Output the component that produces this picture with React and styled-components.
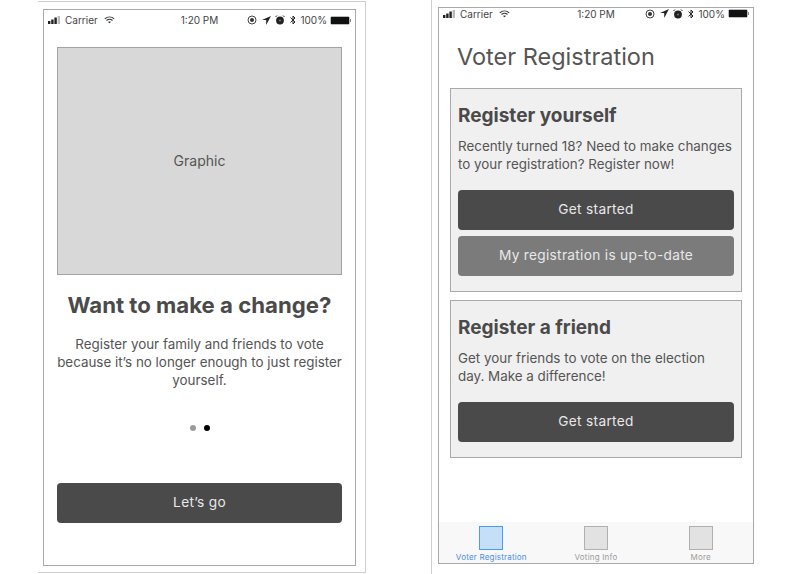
import React from "react";
import styled, { createGlobalStyle } from "styled-components";

const GlobalStyle = createGlobalStyle`
  html, body {
    margin: 0;
    padding: 0;
    background: #fff;
    font-family: Inter, "Liberation Sans", sans-serif;
  }
`;

const StatusBar = ({ compact }) => (
  <Status $compact={compact}>
    <StatusSide>
      <svg width="14" height="8" viewBox="0 0 14 8">
        <rect x="0" y="5" width="2.4" height="3" fill="#222" />
        <rect x="3.2" y="3.5" width="2.4" height="4.5" fill="#222" />
        <rect x="6.4" y="1.5" width="2.4" height="6.5" fill="#222" />
        <rect x="9.6" y="0" width="2.4" height="8" fill="#bbb" />
      </svg>
      <span>Carrier</span>
      <svg width="11" height="8" viewBox="0 0 14 10" style={{ marginLeft: 3 }}>
        <path d="M1 3.5C4.5 .5 9.5 .5 13 3.5" fill="none" stroke="#333" strokeWidth="1.4" />
        <path d="M3.2 5.6C5.4 3.8 8.6 3.8 10.8 5.6" fill="none" stroke="#333" strokeWidth="1.4" />
        <path d="M5.2 7.4 7 9.2 8.8 7.4C7.8 6.6 6.2 6.6 5.2 7.4Z" fill="#333" />
      </svg>
    </StatusSide>
    <Clock>1:20 PM</Clock>
    <StatusRight>
      <svg width="10" height="10" viewBox="0 0 10 10">
        <circle cx="5" cy="5" r="4" fill="none" stroke="#444" strokeWidth="1" />
        <circle cx="5" cy="5" r="2" fill="#333" />
      </svg>
      <svg width="9" height="9" viewBox="0 0 9 9" style={{ marginLeft: 5 }}>
        <path d="M9 0 0 4H4.2V9Z" fill="#222" />
      </svg>
      <svg width="10" height="10" viewBox="0 0 10 10" style={{ marginLeft: 4 }}>
        <circle cx="5" cy="5.5" r="3.9" fill="#222" />
        <circle cx="5" cy="5.5" r="1" fill="#777" />
        <path d="M0.5 2 2 .5M9.5 2 8 .5" stroke="#222" strokeWidth="1" />
      </svg>
      <svg width="6" height="10" viewBox="0 0 6 10" style={{ marginLeft: 5 }}>
        <path d="M.5 2.6 5 7 3 9V1L5 3 .5 7.4" fill="none" stroke="#222" strokeWidth="1" />
      </svg>
      <Percent>100%</Percent>
      <Battery>
        <BatteryFill />
      </Battery>
      <BatteryTip />
    </StatusRight>
  </Status>
);

const App = () => (
  <>
    <GlobalStyle />
    <Page>
      <LeftFrame>
        <Phone $wide={313} $tall={557}>
          <StatusBar />
          <Intro>
            <Graphic>Graphic</Graphic>
            <IntroTitle>Want to make a change?</IntroTitle>
            <IntroText>
              Register your family and friends to vote because it’s no longer
              enough to just register yourself.
            </IntroText>
            <Dots>
              <Dot />
              <Dot $active />
            </Dots>
            <Button $tone="dark">Let’s go</Button>
          </Intro>
        </Phone>
      </LeftFrame>
      <RightFrame>
        <Phone $wide={316} $tall={557}>
          <StatusBar compact />
          <Content>
            <Heading>Voter Registration</Heading>
            <Card>
              <CardTitle>Register yourself</CardTitle>
              <CardText>
                Recently turned 18? Need to make changes to your registration?
                Register now!
              </CardText>
              <Button $tone="dark">Get started</Button>
              <Button $tone="mid">My registration is up-to-date</Button>
            </Card>
            <Card>
              <CardTitle>Register a friend</CardTitle>
              <CardText>
                Get your friends to vote on the election day. Make a difference!
              </CardText>
              <Button $tone="dark">Get started</Button>
            </Card>
          </Content>
          <Tabs>
            <Tab $active>
              <TabIcon $active />
              <TabLabel>Voter Registration</TabLabel>
            </Tab>
            <Tab>
              <TabIcon />
              <TabLabel>Voting Info</TabLabel>
            </Tab>
            <Tab>
              <TabIcon />
              <TabLabel>More</TabLabel>
            </Tab>
          </Tabs>
        </Phone>
      </RightFrame>
    </Page>
  </>
);

export default App;

const Page = styled.div`
  width: 795px;
  height: 574px;
  display: flex;
  overflow: hidden;
  box-sizing: border-box;
  padding-left: 38px;
  background: #fff;
`;

const LeftFrame = styled.div`
  width: 328px;
  height: 572px;
  box-sizing: border-box;
  margin-top: 1px;
  padding: 7px 0 0 5px;
  border-top: 1px solid #cfcfcf;
  border-right: 1px solid #cfcfcf;
  border-bottom: 1px solid #cfcfcf;
`;

const RightFrame = styled.div`
  width: 322px;
  height: 574px;
  box-sizing: border-box;
  margin-left: 65px;
  padding: 7px 0 0 6px;
  border-left: 1px solid #cfcfcf;
`;

const Phone = styled.div`
  width: ${(p) => p.$wide}px;
  height: ${(p) => p.$tall}px;
  box-sizing: border-box;
  border: 1px solid #a9a9a9;
  display: flex;
  flex-direction: column;
  background: #fff;
`;

const Status = styled.div`
  height: ${(p) => (p.$compact ? "11px" : "20px")};
  flex: none;
  display: flex;
  align-items: center;
  justify-content: space-between;
  position: relative;
  padding: 0 4px;
  font-size: 10px;
  color: #444;
`;

const StatusSide = styled.div`
  display: flex;
  align-items: center;
  gap: 3px;
`;

const StatusRight = styled.div`
  display: flex;
  align-items: center;
`;

const Clock = styled.span`
  position: absolute;
  left: 0;
  right: 0;
  text-align: center;
`;

const Percent = styled.span`
  margin-left: 4px;
`;

const Battery = styled.div`
  width: 20px;
  height: 9px;
  margin-left: 3px;
  box-sizing: border-box;
  border: 1px solid #bbb;
  border-radius: 2px;
`;

const BatteryFill = styled.div`
  width: 100%;
  height: 100%;
  background: #111;
`;

const BatteryTip = styled.div`
  width: 1px;
  height: 3px;
  background: #888;
`;

const Intro = styled.div`
  flex: 1;
  display: flex;
  flex-direction: column;
  align-items: center;
  padding: 17px 13px 0;
`;

const Graphic = styled.div`
  width: 100%;
  height: 228px;
  box-sizing: border-box;
  border: 1px solid #a3a3a3;
  padding-bottom: 2px;
  background: #d8d8d8;
  color: #555;
  font-size: 14px;
  display: flex;
  align-items: center;
  justify-content: center;
`;

const IntroTitle = styled.h1`
  margin: 16px 0 0;
  font-size: 22.2px;
  line-height: 28px;
  font-weight: 700;
  color: #4a4a4a;
`;

const IntroText = styled.p`
  margin: 16px 0 0;
  font-size: 13.4px;
  line-height: 18px;
  text-align: center;
  color: #555;
`;

const Dots = styled.div`
  display: flex;
  gap: 8px;
  margin-top: 36px;
  margin-bottom: 52px;
`;

const Dot = styled.div`
  width: 6px;
  height: 6px;
  border-radius: 50%;
  background: ${(p) => (p.$active ? "#000" : "#9b9b9b")};
`;

const Button = styled.div`
  width: 100%;
  height: 40px;
  flex: none;
  box-sizing: border-box;
  padding-bottom: 2px;
  border-radius: 4px;
  display: flex;
  align-items: center;
  justify-content: center;
  font-size: 13.7px;
  letter-spacing: 0.3px;
  color: #e8e8e8;
  background: ${(p) => (p.$tone === "mid" ? "#7b7b7b" : "#4a4a4a")};
  & + & {
    margin-top: 6px;
  }
`;

const Content = styled.div`
  flex: 1;
  padding: 0 11px;
`;

const Heading = styled.h1`
  margin: 23px 0 16px 7px;
  font-size: 23.5px;
  line-height: 30px;
  font-weight: 400;
  color: #555;
`;

const Card = styled.div`
  box-sizing: border-box;
  border: 1px solid #a9a9a9;
  background: #f0f0f0;
  padding: 15px 7px 15px;
  & + & {
    margin-top: 8px;
  }
`;

const CardTitle = styled.h2`
  margin: 0;
  font-size: 19px;
  line-height: 24px;
  font-weight: 700;
  color: #4a4a4a;
`;

const CardText = styled.p`
  margin: 9px 0 17px;
  font-size: 13.4px;
  line-height: 18px;
  color: #555;
`;

const Tabs = styled.div`
  height: 41px;
  flex: none;
  display: grid;
  grid-template-columns: repeat(3, 1fr);
  background: #f8f8f8;
`;

const Tab = styled.div`
  display: flex;
  flex-direction: column;
  align-items: center;
  padding-top: 4px;
  color: ${(p) => (p.$active ? "#4a90e2" : "#9b9b9b")};
`;

const TabIcon = styled.div`
  width: 24px;
  height: 24px;
  box-sizing: border-box;
  border: 1px solid ${(p) => (p.$active ? "#4a9bf0" : "#b0b0b0")};
  background: ${(p) => (p.$active ? "#c5dff8" : "#e2e2e2")};
`;

const TabLabel = styled.span`
  margin-top: 2px;
  font-size: 8px;
  line-height: 10px;
  letter-spacing: 0.2px;
  white-space: nowrap;
`;
